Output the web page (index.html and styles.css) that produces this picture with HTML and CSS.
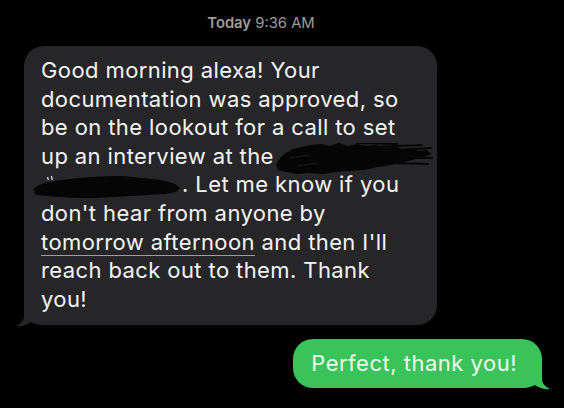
FILE: index.html
```html
<!DOCTYPE html>
<html>
<head>
<meta charset="utf-8">
<link rel="stylesheet" href="styles.css">
</head>
<body>
<div class="thread">
  <div class="stamp"><span class="day">Today</span> 9:36 AM</div>

  <div class="row row-in">
    <div class="bubble bubble-in">
      <p class="msg">Good morning alexa! Your<br>documentation was approved, so<br>be on the lookout for a call to set<br>up an interview at the <span class="redact r1"><svg class="scribble s1" width="158" height="32" viewBox="0 0 158 32"><path d="M1 22 L5 15 L11 10 L18 6 L27 4 L36 2 L46 1 L55 3 L64 0 L73 3 L82 1 L92 3 L101 2 L109 5 L118 3 L127 6 L135 5 L144 8 L151 7 L157 11 L150 13 L155 16 L141 16 L129 19 L116 22 L103 24 L89 27 L75 28 L61 29 L47 31 L33 30 L21 31 L11 29 L3 27 Z" fill="#050505"/><path d="M98 4 L147 2 M110 8 L156 5 M118 20 L153 21 M82 0 L122 1 M130 13 L157 15" stroke="#070707" stroke-width="2.2" stroke-linecap="round" fill="none"/><path d="M14 15 L34 12 M22 23 L42 20" stroke="#1e1e1e" stroke-width="1" fill="none"/></svg></span><br><span class="redact r2"><svg class="scribble s2" width="149" height="25" viewBox="0 0 154 25" preserveAspectRatio="none"><path d="M1 15 L7 11 L18 8 L32 6 L48 4 L64 3 L80 2 L96 2 L112 4 L126 5 L138 7 L148 10 L153 14 L149 18 L137 20 L120 21 L102 22 L84 23 L66 24 L48 24 L30 23 L16 22 L6 21 Z" fill="#050505"/><path d="M4 19 L30 16" stroke="#050505" stroke-width="3" stroke-linecap="round"/><path d="M16 3 L17 6 M20 2 L21 6" stroke="#d9d9d9" stroke-width="1.4" fill="none"/></svg></span>. Let me know if you<br>don't hear from anyone by<br><span class="link">tomorrow afternoon</span> and then I'll<br>reach back out to them. Thank<br>you!</p>
      <svg class="tail tail-in" width="30" height="28" viewBox="0 0 30 28"><path d="M30 2 L8 2 L8 18 Q7 24 0 27 Q8 28 15 23 Q20 26 30 26 Z" fill="#262628"/></svg>
    </div>
  </div>

  <div class="row row-out">
    <div class="bubble bubble-out">
      <p class="msg">Perfect, thank you!</p>
      <svg class="tail tail-out" width="30" height="28" viewBox="0 0 30 28"><path d="M0 2 L22 2 L22 18 Q23 24 30 27 Q22 28 15 23 Q10 26 0 26 Z" fill="#39c35a"/></svg>
    </div>
  </div>
</div>
</body>
</html>
```

FILE: styles.css
```css
html, body {
  margin: 0;
  padding: 0;
  background: #000;
}

body {
  width: 564px;
  height: 408px;
  overflow: hidden;
  font-family: Inter, "Noto Sans", "Liberation Sans", sans-serif;
}

.thread {
  display: flex;
  flex-direction: column;
}

.stamp {
  width: 522px;
  padding-top: 13px;
  height: 20px;
  line-height: 20px;
  font-size: 14.8px;
  color: #9c9c9e;
  text-align: center;
}

.day {
  font-weight: 600;
}

.row {
  display: flex;
}

.row-in {
  margin-top: 13px;
  padding-left: 24px;
}

.row-out {
  margin-top: 14px;
  justify-content: flex-end;
  padding-right: 22px;
}

.bubble {
  position: relative;
  border-radius: 20px;
}

.bubble-in {
  width: 413px;
  box-sizing: border-box;
  background: #262628;
  padding: 10px 17px 12px 17px;
}

.bubble-out {
  background: #39c35a;
  padding: 10px 25px 10px 18px;
}

.msg {
  margin: 0;
  font-size: 22px;
  letter-spacing: 0.4px;
  line-height: 28.6px;
  color: #f4f4f4;
  white-space: nowrap;
  position: relative;
  z-index: 1;
}

.bubble-out .msg {
  color: #eefaf0;
  letter-spacing: 0.5px;
}

.link {
  text-decoration: underline;
  text-decoration-color: rgba(255, 255, 255, 0.55);
  text-decoration-thickness: 1px;
  text-underline-offset: 5px;
}

.redact {
  display: inline-block;
  position: relative;
  height: 0;
  vertical-align: baseline;
}

.r1 {
  width: 150px;
}

.r2 {
  width: 141px;
}

.scribble {
  position: absolute;
  display: block;
}

.s1 {
  left: -5px;
  top: -21px;
}

.s2 {
  left: -9px;
  top: -18px;
}

.tail {
  position: absolute;
  bottom: -2px;
  display: block;
}

.tail-in {
  left: -8px;
}

.tail-out {
  right: -8px;
}
```
